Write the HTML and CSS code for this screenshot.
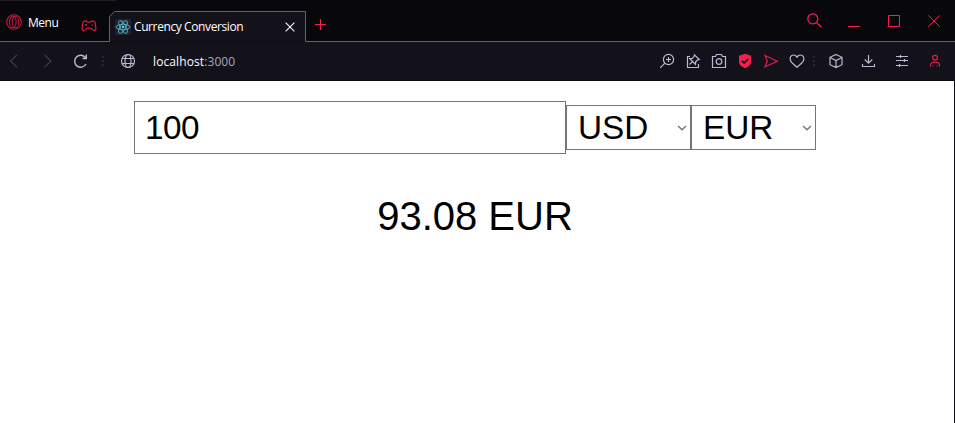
FILE: index.html
```html
<!DOCTYPE html>
<html lang="en">
<head>
<meta charset="utf-8">
<title>Currency Conversion</title>
<link rel="stylesheet" href="styles.css">
</head>
<body>
<div class="window">
  <header class="tabbar">
    <div class="menu">
      <svg class="opera" width="16" height="16" viewBox="0 0 16 16"><circle cx="8" cy="8" r="7.3"/><ellipse cx="6.800" cy="8" rx="3.300" ry="5.800"/><ellipse cx="9.500" cy="8" rx="3.300" ry="5.800"/></svg>
      <span class="menu-label">Menu</span>
      <svg class="gamepad" width="16" height="12" viewBox="0 0 16 12"><path d="M3.500 1.200h2l1 1h3l1-1h2c1 0 1.500.8 1.800 2l.6 5c.1 1.500-.8 2.500-2 2.500-1.400 0-1.700-2.500-3.200-2.500H6.300c-1.500 0-1.800 2.500-3.200 2.500-1.200 0-2.100-1-2-2.500l.6-5c.3-1.200.8-2 1.800-2zM4 5h2M5 4v2M10.500 5h1.500"/></svg>
    </div>
    <div class="tab">
      <svg class="tab-shape" width="197" height="31" viewBox="0 0 197 31"><path d="M0 30.500h.5V5.500l5-5h191v30h.5"/></svg>
      <svg class="react" width="16" height="16" viewBox="0 0 16 16"><rect width="16" height="16" rx="1"/><g><ellipse cx="8" cy="8" rx="7" ry="2.700"/><ellipse cx="8" cy="8" rx="7" ry="2.700" transform="rotate(60 8 8)"/><ellipse cx="8" cy="8" rx="7" ry="2.700" transform="rotate(120 8 8)"/></g><circle cx="8" cy="8" r="1.300"/></svg>
      <span class="tab-title">Currency Conversion</span>
      <svg class="tab-close" width="10" height="10" viewBox="0 0 10 10"><path d="M.6.6l8.800 8.800M9.400.6L.6 9.400"/></svg>
    </div>
    <div class="tabbar-rest">
      <svg class="plus" width="11" height="11" viewBox="0 0 11 11"><path d="M5.500 0v11M0 5.500h11"/></svg>
      <div class="controls">
        <svg width="15" height="15" viewBox="0 0 15 15"><circle cx="5.800" cy="5.800" r="5"/><path d="M9.500 9.500l5 4.800"/></svg>
        <svg class="minimize" width="12" height="13" viewBox="0 0 12 13"><path d="M0 11.500h12"/></svg>
        <svg width="12" height="12" viewBox="0 0 12 12"><path d="M.5.5h11v11H.5z"/></svg>
        <svg width="12" height="12" viewBox="0 0 12 12"><path d="M.3.3l11.400 11.400M11.700.3L.3 11.700"/></svg>
      </div>
    </div>
  </header>
  <nav class="toolbar">
    <div class="navigation">
      <svg class="dim" width="16" height="16" viewBox="0 0 16 16"><path d="M11 1.800L4.500 8l6.500 6.200"/></svg>
      <svg class="dim" width="16" height="16" viewBox="0 0 16 16"><path d="M4.500 1.800L11 8l-6.500 6.200"/></svg>
      <svg class="reload" width="16" height="16" viewBox="0 0 16 16"><path d="M12.500 4.700A6 6 0 1 0 13 11M13.300 1.500v4H9.500"/></svg>
    </div>
    <svg class="dots" width="2" height="10" viewBox="0 0 2 10"><path d="M0 0h2v2H0zM0 4h2v2H0zM0 8h2v2H0z"/></svg>
    <svg class="globe" width="16" height="16" viewBox="0 0 16 16"><circle cx="8" cy="8" r="6.500"/><ellipse cx="8" cy="8" rx="3" ry="6.500"/><path d="M2.200 5.500h11.600M2.200 10.500h11.600"/></svg>
    <span class="address">localhost<span class="port">:3000</span></span>
    <div class="actions">
      <svg width="16" height="16" viewBox="0 0 16 16"><circle cx="9.500" cy="6.500" r="5.100"/><path d="M5.700 10.300L1.200 14.800M9.500 4v5M7 6.500h5"/></svg>
      <svg width="16" height="16" viewBox="0 0 16 16"><path d="M5 3.500H2.500v11h11V11M9.500 1.800l4.700 4.700-1.500.3-2 2-.2 2.500-5.800-5.800 2.500-.2 2-2zM7.600 8.400l-3.100 3.100"/></svg>
      <svg width="16" height="16" viewBox="0 0 16 16"><path d="M1.500 3.500h3l1-2h5l1 2h3v11h-13z"/><circle cx="8" cy="8.500" r="2.800"/></svg>
      <svg width="16" height="16" viewBox="0 0 16 16"><path class="shield" d="M8 .8l6 2v6.300c0 3.100-2.800 4.900-6 6.100-3.200-1.200-6-3-6-6.100V2.800z"/><path class="check" d="M4.800 7.800l2.300 2.300 4.300-4.300"/></svg>
      <svg class="red" width="16" height="16" viewBox="0 0 16 16"><path d="M2 2.500L14.300 8.300 2 13.800l2.300-5.500z"/></svg>
      <svg width="16" height="16" viewBox="0 0 16 16"><path d="M8 14.300L3.200 10C-.5 6.500 1.200 2 4.800 2 6.500 2 8 3.700 8 4.700 8 3.700 9.500 2 11.200 2c3.600 0 5.300 4.500 1.600 8z"/></svg>
    </div>
    <svg class="dots dots-right" width="2" height="10" viewBox="0 0 2 10"><path d="M0 0h2v2H0zM0 4h2v2H0zM0 8h2v2H0z"/></svg>
    <div class="tools">
      <svg width="16" height="16" viewBox="0 0 16 16"><path d="M8 1.500l6 2.800v7.400l-6 2.800-6-2.800V4.300zM2 4.500l6 3 6-3M8 7.500v7"/></svg>
      <svg width="16" height="16" viewBox="0 0 16 16"><path d="M7.500 2v8M3.700 6.500l3.800 3.700 3.800-3.700M1.500 11v2.500h12V11"/></svg>
      <svg width="16" height="16" viewBox="0 0 16 16"><path d="M2 3.500h12M2 7.500h12M2 12.500h12M6.500 2v3M10.500 6v3M5.500 11v3"/></svg>
      <svg class="red" width="16" height="16" viewBox="0 0 16 16"><circle cx="8" cy="4.800" r="2.400"/><path d="M3.500 13.500v-1.300c0-2 2-3 4.500-3s4.500 1 4.500 3v1.300M5.600 13.500v-1M10.400 13.500v-1"/></svg>
    </div>
  </nav>
  <main class="page">
    <div class="converter">
      <div class="field amount">100</div>
      <div class="field currency">USD<svg width="10" height="6" viewBox="0 0 10 6"><path d="M1 1l4 3.700L9 1"/></svg></div>
      <div class="field currency">EUR<svg width="10" height="6" viewBox="0 0 10 6"><path d="M1 1l4 3.700L9 1"/></svg></div>
    </div>
    <p class="result">93.08 EUR</p>
  </main>
</div>
</body>
</html>
```
FILE: styles.css
```css
* { box-sizing: border-box; }
body { margin: 0; background: #fff; }
svg { display: block; flex: none; fill: none; stroke: #bdb8d2; stroke-width: 1.2; }
.window { width: 955px; height: 423px; display: flex; flex-direction: column; overflow: hidden; }

.tabbar { height: 42px; display: flex; background: #08070c linear-gradient(#201f22, #201f22) 0 0 / 116px 1px no-repeat; font: 12px "Open Sans", sans-serif; color: #fff; }
.tabbar svg { stroke: #fa1e4e; }
.menu { width: 109px; padding: 3px 0 0 6px; border-bottom: 1px solid #fa1e4e; display: flex; align-items: center; }
.tabbar .opera { stroke: #c51a40; stroke-width: 1.1; }
.menu-label { margin: 2px 0 0 6px; width: 53px; letter-spacing: -0.5px; line-height: 16px; }
.tabbar .gamepad { margin-top: 8px; stroke: #d51b44; }
.tab { position: relative; width: 197px; height: 31px; margin-top: 11px; padding: 0 11px 0 6px; display: flex; align-items: center; }
.tab-shape { position: absolute; left: 0; top: 0; }
.tabbar .tab-shape { fill: #13111a; stroke-width: 1; }
.react { position: relative; }
.react rect { fill: #20232a; stroke: none; }
.react g { stroke: #55b5cd; stroke-width: .9; }
.react circle { fill: #61dafb; stroke: none; }
.tab-title { position: relative; margin-left: 3px; flex: 1; letter-spacing: -0.4px; line-height: 16px; white-space: nowrap; }
.tab-close { position: relative; }
.tabbar .tab-close { stroke: #f0eff4; }
.tabbar-rest { flex: 1; border-bottom: 1px solid #fa1e4e; display: flex; justify-content: space-between; padding: 0 15px 0 9px; }
.plus { margin-top: 19px; }
.tabbar .plus { stroke-width: 1; }
.controls { display: flex; gap: 28px; padding-top: 15px; }
.controls svg { stroke-width: 1; }
.controls svg:first-child { margin: -2px -2px 0 0; stroke-width: 1.2; }

.toolbar { height: 39px; display: flex; align-items: center; padding: 0 12px 0 6px; background: #13111a; border-bottom: 1px solid #0c0b12; }
.navigation { display: flex; gap: 18px; }
.toolbar .dim { stroke: #3e3b48; }
.reload { margin-left: -1px; stroke-width: 1.4; }
.toolbar .dots { margin-left: 13px; fill: #282532; stroke: none; }
.globe { margin-left: 16px; }
.address { margin: 2px 0 0 17px; font: 12px/16px "Open Sans", sans-serif; letter-spacing: 0.1px; color: #fff; }
.port { color: #aaa5bf; }
.actions { display: flex; gap: 10px; margin-left: auto; }
.toolbar .red { stroke: #df1d48; }
.shield { fill: #fa1e4e; stroke: none; }
.check { stroke: #13111a; stroke-width: 1.6; }
.toolbar .dots-right { margin: 0 13px 0 8px; }
.tools { display: flex; gap: 17px; }

.page { flex: 1; padding-top: 20px; border-right: 1px solid #0c0b12; background: #fff; font-family: "Liberation Sans", Arial, sans-serif; color: #000; }
.converter { display: flex; align-items: center; width: 682px; margin-left: 134px; }
.field { border: 1px solid #767676; font-size: 33.333px; line-height: 38px; }
.amount { width: 432px; height: 53px; padding: 7px 10px; letter-spacing: -0.5px; }
.currency { width: 125px; height: 45px; padding: 3px 3px 0 11px; display: flex; justify-content: space-between; }
.currency svg { margin-top: 16px; stroke: #767676; stroke-width: 1.5; }
.result { margin: 39px 0 0; font-size: 40px; line-height: 46px; text-align: center; padding-right: 4px; }
```
